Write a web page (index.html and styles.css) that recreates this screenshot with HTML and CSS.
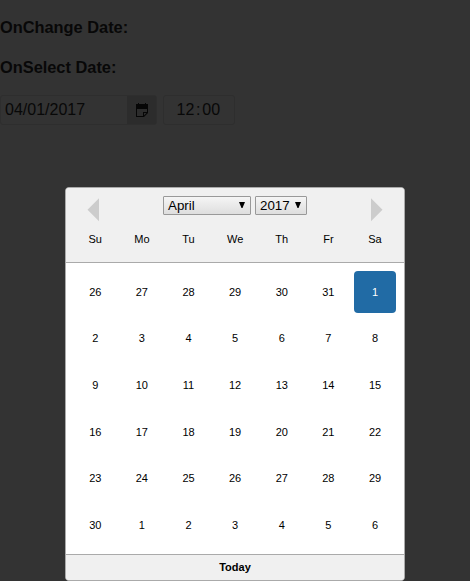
FILE: index.html
```html
<!DOCTYPE html>
<html lang="en">
<head>
<meta charset="utf-8">
<title>Date picker</title>
<link rel="stylesheet" href="styles.css">
</head>
<body>
<main class="page">
  <h3 class="label">OnChange Date:</h3>
  <h3 class="label">OnSelect Date:</h3>
  <div class="fields">
    <div class="date-field">
      <span class="date-value">04/01/2017</span>
      <span class="date-button">
        <svg width="12" height="14" viewBox="0 0 12 14"><path fill="#060606" d="M0 1h2V0h1v1h6V0h1v1h2V10l-4 4H0zM1 6v7h6V9h4V6zM8 10v2.500l2.500-2.500z" fill-rule="evenodd"/></svg>
      </span>
    </div>
    <div class="time-field"><span>12</span><span class="colon">:</span><span>00</span></div>
  </div>
</main>
<div class="overlay">
  <section class="calendar">
    <header class="head">
      <div class="nav">
        <svg class="prev" width="12" height="24" viewBox="0 0 12 24"><path d="M12 .3v23L.5 11.800z"/></svg>
        <div class="selects">
          <span class="select month">April<svg width="6" height="6" viewBox="0 0 6 6"><path d="M0 0h6L3.5 6h-1z"/></svg></span>
          <span class="select year">2017<svg width="6" height="6" viewBox="0 0 6 6"><path d="M0 0h6L3.5 6h-1z"/></svg></span>
        </div>
        <svg class="next" width="12" height="24" viewBox="0 0 12 24"><path d="M0 .3v23l11.500-11.500z"/></svg>
      </div>
      <div class="week"><span>Su</span><span>Mo</span><span>Tu</span><span>We</span><span>Th</span><span>Fr</span><span>Sa</span></div>
    </header>
    <div class="days">
      <span>26</span><span>27</span><span>28</span><span>29</span><span>30</span><span>31</span><span class="selected">1</span>
      <span>2</span><span>3</span><span>4</span><span>5</span><span>6</span><span>7</span><span>8</span>
      <span>9</span><span>10</span><span>11</span><span>12</span><span>13</span><span>14</span><span>15</span>
      <span>16</span><span>17</span><span>18</span><span>19</span><span>20</span><span>21</span><span>22</span>
      <span>23</span><span>24</span><span>25</span><span>26</span><span>27</span><span>28</span><span>29</span>
      <span>30</span><span>1</span><span>2</span><span>3</span><span>4</span><span>5</span><span>6</span>
    </div>
    <footer class="today">Today</footer>
  </section>
</div>
</body>
</html>
```
FILE: styles.css
```css
* { box-sizing: border-box; }
html, body { height: 100%; overflow: hidden; }
body {
  margin: 0;
  background: #333;
  color: #080808;
  font-family: "Liberation Sans", Arial, sans-serif;
}
svg { display: block; }
.page { padding-top: 17px; }
.label { margin: 0 0 20px; font-size: 16.38px; line-height: 20px; }
.fields { display: flex; gap: 6px; margin-top: -2px; font-size: 16px; line-height: 28px; }
.date-field {
  display: flex;
  width: 157px;
  height: 30px;
  border: 1px solid #2e2e2e;
  border-radius: 3px;
}
.date-value { flex: 1; padding-left: 4px; }
.date-button {
  display: flex;
  align-items: center;
  justify-content: center;
  width: 29px;
  background: #2c2c2c;
}
.time-field {
  display: flex;
  width: 72px;
  height: 30px;
  padding-left: 12.500px;
  border: 1px solid #2e2e2e;
  border-radius: 3px;
}
.colon { width: 8px; text-align: center; }
.overlay {
  position: absolute;
  inset: 0;
  padding: 187px 0 0 65px;
}
.calendar {
  width: 340px;
  height: 394px;
  border: 1px solid #aaa;
  border-radius: 4px;
  overflow: hidden;
  background: #fff;
  color: #000;
  font-size: 11px;
}
.head { height: 75px; background: #f0f0f0; border-bottom: 1px solid #aaa; }
.nav { display: flex; justify-content: space-between; padding: 8px 21px 0; height: 41px; }
.nav > svg { fill: #ccc; margin-top: 2px; }
.selects { display: flex; gap: 4px; }
.select {
  display: flex;
  align-items: center;
  justify-content: space-between;
  height: 19px;
  padding: 0 5px 0 4px;
  border: 1px solid #999;
  border-radius: 1px;
  background: linear-gradient(#f5f5f5, #dedede);
  font-size: 13.333px;
  line-height: 17px;
}
.select svg { margin-top: -2px; }
.month { width: 88px; }
.year { width: 52px; }
.week, .days {
  display: grid;
  grid-template-columns: repeat(7, 42px);
  justify-content: space-between;
  padding: 0 8px 0 8.250px;
  text-align: center;
}
.week { line-height: 20px; }
.days {
  height: 291px;
  padding-top: 7.750px;
  grid-template-rows: repeat(6, 42px);
  row-gap: 4.670px;
  line-height: 42px;
}
.selected { border-radius: 4px; background: #216ba5; color: #fff; }
.today {
  height: 26px;
  border-top: 1px solid #aaa;
  background: #f0f0f0;
  font-weight: bold;
  line-height: 25px;
  text-align: center;
}
```
